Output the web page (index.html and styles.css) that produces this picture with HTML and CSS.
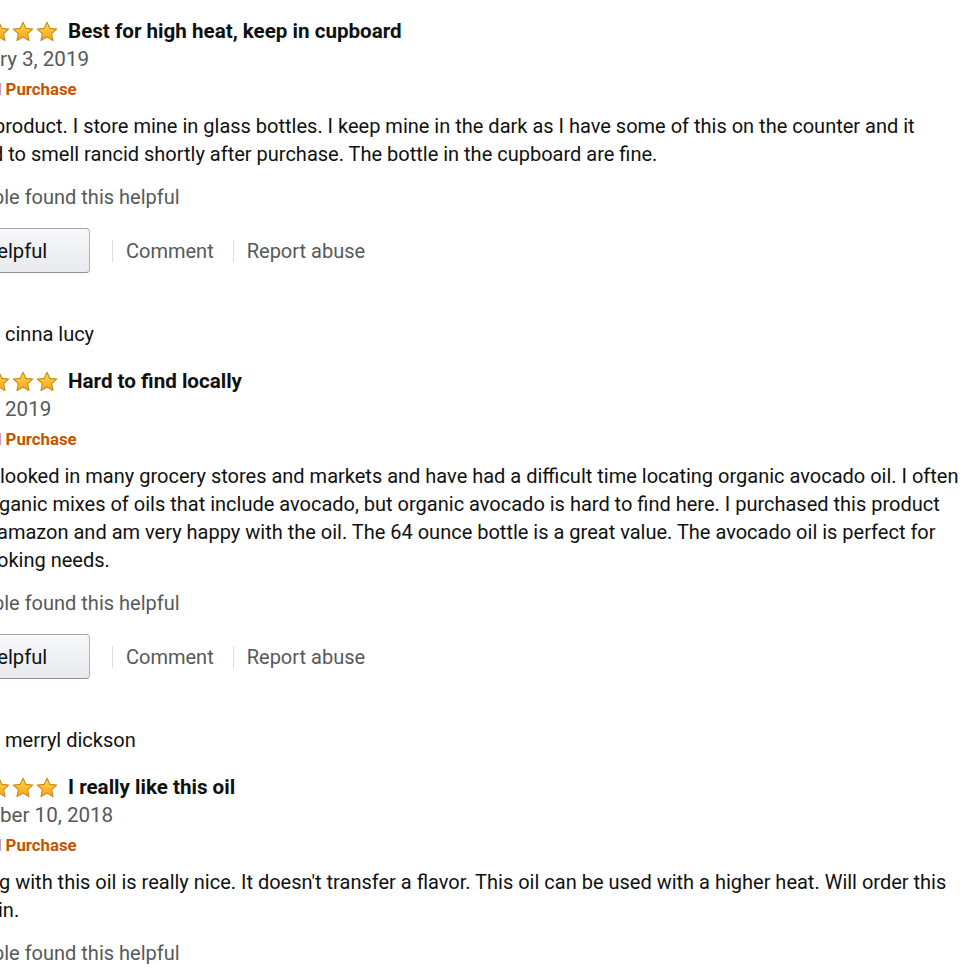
FILE: index.html
```html
<!DOCTYPE html>
<html lang="en">
<head>
<meta charset="utf-8">
<title>Reviews</title>
<link rel="stylesheet" href="styles.css">
</head>
<body>
<svg width="0" height="0" class="defs" aria-hidden="true">
  <defs>
    <linearGradient id="starfill" x1="0" y1="0" x2="0" y2="1">
      <stop offset="0" stop-color="#FFD84A"/>
      <stop offset="1" stop-color="#FFA41C"/>
    </linearGradient>
    <symbol id="star" viewBox="0 0 22 21">
      <path d="M11 1.2 L13.9 7.4 L20.6 8.1 L15.6 12.7 L17 19.4 L11 16 L5 19.4 L6.4 12.7 L1.4 8.1 L8.1 7.4 Z" fill="url(#starfill)" stroke="#C98A1B" stroke-width="1.1" stroke-linejoin="round"/>
    </symbol>
  </defs>
</svg>
<main class="reviews">
  <section class="review">
    <div class="title-row">
      <span class="stars"><svg class="star"><use href="#star"/></svg><svg class="star"><use href="#star"/></svg><svg class="star"><use href="#star"/></svg><svg class="star"><use href="#star"/></svg><svg class="star"><use href="#star"/></svg></span>
      <span class="title">Best for high heat, keep in cupboard</span>
    </div>
    <div class="date">ry 3, 2019</div>
    <div class="verified">d Purchase</div>
    <p class="body"><span class="line cut-p">product. I store mine in glass bottles. I keep mine in the dark as I have some of this on the counter and it</span><span class="line cut-d">d to smell rancid shortly after purchase. The bottle in the cupboard are fine.</span></p>
    <div class="helpful-count">ple found this helpful</div>
    <div class="actions">
      <button class="helpful-btn" type="button">Helpful</button>
      <span class="sep"></span>
      <span class="action">Comment</span>
      <span class="sep"></span>
      <span class="action">Report abuse</span>
    </div>
  </section>

  <section class="review">
    <div class="profile">cinna lucy</div>
    <div class="title-row">
      <span class="stars"><svg class="star"><use href="#star"/></svg><svg class="star"><use href="#star"/></svg><svg class="star"><use href="#star"/></svg><svg class="star"><use href="#star"/></svg><svg class="star"><use href="#star"/></svg></span>
      <span class="title">Hard to find locally</span>
    </div>
    <div class="date indent">2019</div>
    <div class="verified">d Purchase</div>
    <p class="body"><span class="line">looked in many grocery stores and markets and have had a difficult time locating organic avocado oil. I often</span><span class="line cut-1">ganic mixes of oils that include avocado, but organic avocado is hard to find here. I purchased this product</span><span class="line cut-3">amazon and am very happy with the oil. The 64 ounce bottle is a great value. The avocado oil is perfect for</span><span class="line cut-3">oking needs.</span></p>
    <div class="helpful-count">ple found this helpful</div>
    <div class="actions">
      <button class="helpful-btn" type="button">Helpful</button>
      <span class="sep"></span>
      <span class="action">Comment</span>
      <span class="sep"></span>
      <span class="action">Report abuse</span>
    </div>
  </section>

  <section class="review">
    <div class="profile">merryl dickson</div>
    <div class="title-row">
      <span class="stars"><svg class="star"><use href="#star"/></svg><svg class="star"><use href="#star"/></svg><svg class="star"><use href="#star"/></svg><svg class="star"><use href="#star"/></svg><svg class="star"><use href="#star"/></svg></span>
      <span class="title">I really like this oil</span>
    </div>
    <div class="date">ber 10, 2018</div>
    <div class="verified">d Purchase</div>
    <p class="body"><span class="line cut-1">g with this oil is really nice. It doesn't transfer a flavor. This oil can be used with a higher heat. Will order this</span><span class="line cut-i">in.</span></p>
    <div class="helpful-count">ple found this helpful</div>
  </section>
</main>
</body>
</html>
```
FILE: styles.css
```css
* { box-sizing: border-box; }
html, body {
  margin: 0;
  padding: 0;
  background: #ffffff;
  overflow: hidden;
}
body {
  font-family: Roboto, "Liberation Sans", Arial, sans-serif;
  font-size: 20px;
  line-height: 28px;
  color: #0f1111;
  width: 980px;
  height: 980px;
}
.defs { position: absolute; width: 0; height: 0; }
.reviews {
  display: flex;
  flex-direction: column;
  padding-top: 17px;
  white-space: nowrap;
}
.review { display: flex; flex-direction: column; margin-bottom: 47px; }
.profile { margin-left: 5px; color: #0f1111; }
.title-row {
  display: flex;
  align-items: center;
  margin-left: -60px;
  height: 28px;
}
.profile + .title-row { margin-top: 19px; }
.stars { display: flex; gap: 2px; }
.star { width: 22px; height: 21px; display: block; }
.title {
  font-weight: 700;
  font-size: 20.6px;
  color: #0f1111;
  margin-left: 10px;
}
.date { color: #565959; font-size: 20.6px; }
.date.indent { margin-left: 5px; }
.verified {
  margin-top: 2px;
  color: #c45500;
  font-weight: 700;
  font-size: 16.8px;
  margin-left: -8px;
}
.body { margin: 9px 0 0 0; display: flex; flex-direction: column; }
.line { display: block; }
.cut-p { margin-left: -6px; }
.cut-d { margin-left: -8px; }
.cut-1 { margin-left: -1px; }
.cut-3 { margin-left: -3px; }
.cut-i { margin-left: -2px; }
.helpful-count { margin-top: 15px; color: #565959; margin-left: -7px; }
.actions {
  margin-top: 17px;
  display: flex;
  align-items: center;
  height: 45px;
}
.helpful-btn {
  font-family: inherit;
  font-size: 20.2px;
  color: #0f1111;
  height: 45px;
  width: 154px;
  margin-left: -64px;
  padding: 0 0 0 4px;
  border: 1px solid #adb1b8;
  border-top-color: #a2a6ac;
  border-bottom-color: #8d9096;
  border-radius: 4px;
  background: linear-gradient(#f7f8fa, #e7e9ec);
  box-shadow: inset 0 1px 0 rgba(255,255,255,0.6);
}
.sep {
  width: 1px;
  height: 22px;
  background: #dddddd;
  margin: 0 13px 0 22px;
}
.sep + .action + .sep { margin-left: 19px; }
.action { color: #565959; }
```
